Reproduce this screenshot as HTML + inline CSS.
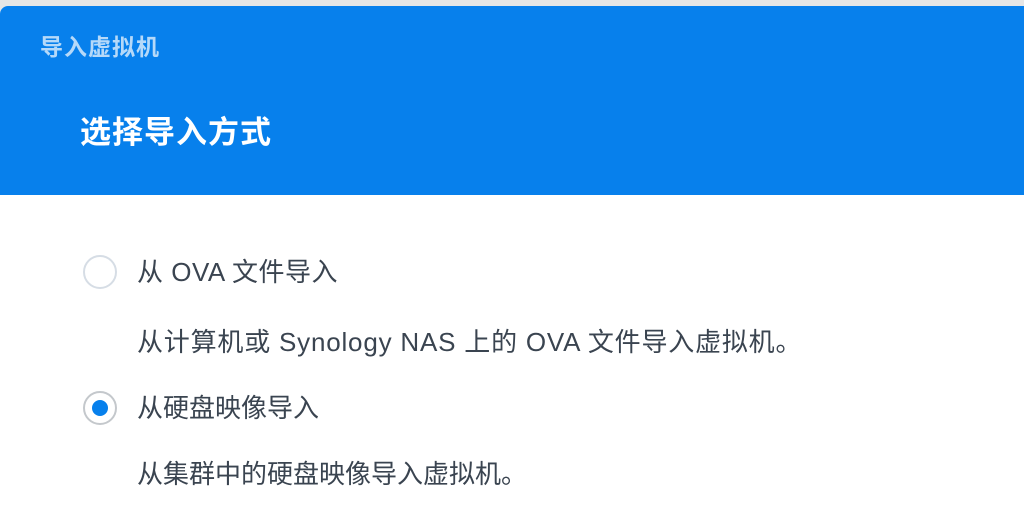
<!DOCTYPE html>
<html><head><meta charset="utf-8"><style>
*{margin:0;padding:0;box-sizing:border-box}
body{width:1024px;height:516px;overflow:hidden;background:#e6e6e6;font-family:"Liberation Sans","Noto Sans CJK SC",sans-serif;position:relative}
.win{position:absolute;left:0;top:6px;width:1024px;height:520px;background:#fff;border-top-left-radius:8px;overflow:hidden}
.hd{position:absolute;left:0;top:0;width:1024px;height:189px;background:#0780ec}
.t1{position:absolute;left:40px;top:26px;font-size:23px;font-weight:bold;color:rgba(255,255,255,0.7);line-height:30px;letter-spacing:1px}
.t2{position:absolute;left:80px;top:107px;font-size:31px;font-weight:bold;color:#fff;line-height:40px;letter-spacing:1px}
.r{position:absolute;left:83px;width:34px;height:34px;border-radius:50%;border:2px solid #d6dde5;background:#fff}
.r.on{border-color:#c4c8cc}
.r.on:after{content:"";position:absolute;left:7px;top:7px;width:16px;height:16px;border-radius:50%;background:#0780ec}
.l{position:absolute;left:137px;font-size:26px;color:#3a4450;line-height:32px;white-space:nowrap}
</style></head><body>
<div class="win">
<div class="hd"><div class="t1">导入虚拟机</div><div class="t2">选择导入方式</div></div>
<div class="r" style="top:249px"></div>
<div class="l" style="top:250px;letter-spacing:0.5px">从 OVA 文件导入</div>
<div class="l" style="top:320px;letter-spacing:0.8px">从计算机或 Synology NAS 上的 OVA 文件导入虚拟机。</div>
<div class="r on" style="top:385px"></div>
<div class="l" style="top:386px">从硬盘映像导入</div>
<div class="l" style="top:452px">从集群中的硬盘映像导入虚拟机。</div>
</div>
</body></html>
